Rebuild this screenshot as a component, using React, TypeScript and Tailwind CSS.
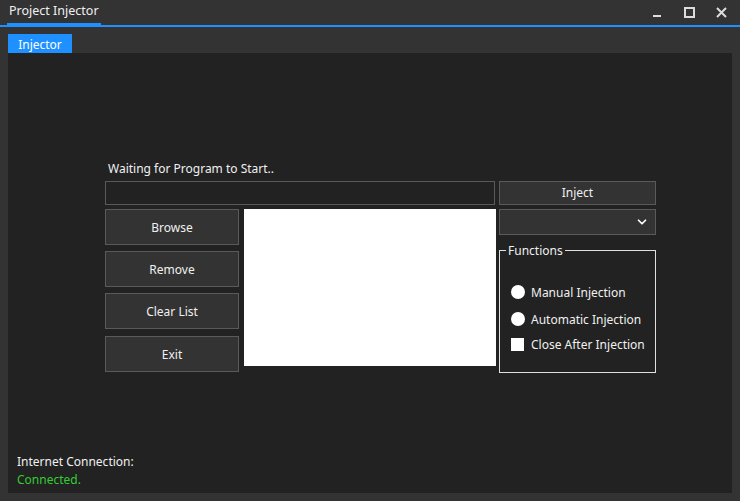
import { ChevronDown } from "lucide-react"

const buttons = [
  { label: "Browse", mt: "" },
  { label: "Remove", mt: "mt-[6px]" },
  { label: "Clear List", mt: "mt-[6px]" },
  { label: "Exit", mt: "mt-[7px]" },
]

function Radio({ label }: { label: string }) {
  return (
    <div className="flex items-center h-[18px]">
      <span className="w-[14px] h-[14px] rounded-full bg-white" />
      <span className="ml-[6px] pt-[2px]">{label}</span>
    </div>
  )
}

export default function App() {
  return (
    <div
      className="w-[740px] h-[501px] bg-[#333333] text-[#f0f0f0] text-[12px] flex flex-col overflow-hidden"
      style={{ fontFamily: '"Noto Sans", "Open Sans", sans-serif' }}
    >
      {/* title bar */}
      <div className="h-[27px] flex border-b-2 border-[#1e90ff] relative">
        <div className="ml-[7px] px-[2px] h-[25px] flex items-center border-b-2 border-[#1e90ff] text-[12.5px] leading-none">
          Project Injector
        </div>
        <div className="ml-auto flex items-center h-[25px] text-[#dcdcdc]">
          <div className="w-[32px] h-[25px] flex items-center justify-center">
            <span className="w-[8px] h-[2px] bg-[#dcdcdc] mt-[6px]" />
          </div>
          <div className="w-[32px] h-[25px] flex items-center justify-center">
            <span className="w-[11px] h-[11px] border-2 border-[#dcdcdc]" />
          </div>
          <div className="w-[32px] h-[25px] flex items-center justify-center mr-[3px]">
            <svg width="11" height="11" viewBox="0 0 11 11">
              <path d="M1 1 L10 10 M10 1 L1 10" stroke="#dcdcdc" strokeWidth="2" />
            </svg>
          </div>
        </div>
      </div>

      {/* tabs */}
      <div className="mt-[7px] ml-[8px] flex">
        <div className="w-[64px] h-[19px] bg-[#1e90ff] text-white flex items-center justify-center pt-[2px]">
          Injector
        </div>
      </div>

      {/* panel */}
      <div className="mx-[8px] w-[724px] h-[440px] bg-[#222222] flex flex-col">
        <div className="ml-[97px] mt-[108px] flex flex-col">
          <div className="h-[16px] leading-[16px] ml-[3px]">Waiting for Program to Start..</div>
          <div className="mt-[4px] flex h-[24px]">
            <div className="w-[390px] border border-[#5a5a5a] bg-[#222222]" />
            <div className="ml-[4px] w-[157px] border border-[#5a5a5a] bg-[#333333] flex items-center justify-center">
              Inject
            </div>
          </div>
          <div className="mt-[4px] flex items-start">
            <div className="w-[134px] flex flex-col">
              {buttons.map((b) => (
                <div
                  key={b.label}
                  className={`h-[36px] border border-[#5a5a5a] bg-[#333333] flex items-center justify-center pt-[2px] ${b.mt}`}
                >
                  {b.label}
                </div>
              ))}
            </div>
            <div className="ml-[5px] w-[252px] h-[157px] bg-white" />
            <div className="ml-[3px] w-[157px] flex flex-col">
              <div className="h-[26px] border border-[#5a5a5a] bg-[#333333] flex items-center justify-end pr-[6px]">
                <ChevronDown size={14} strokeWidth={3} className="text-white" />
              </div>
              <div className="mt-[15px] h-[123px] border border-[#e0e0e0] relative">
                <span className="absolute -top-[7px] left-[6px] px-[2px] bg-[#222222] leading-[14px]">
                  Functions
                </span>
                <div className="mt-[32px] ml-[11px] flex flex-col">
                  <Radio label="Manual Injection" />
                  <div className="mt-[9px]">
                    <Radio label="Automatic Injection" />
                  </div>
                  <div className="mt-[7px] flex items-center h-[18px]">
                    <span className="w-[13px] h-[13px] bg-white" />
                    <span className="ml-[7px] pt-[2px]">Close After Injection</span>
                  </div>
                </div>
              </div>
            </div>
          </div>
        </div>
        <div className="mt-auto mb-[4px] ml-[9px] flex flex-col leading-[18px]">
          <span>Internet Connection:</span>
          <span className="text-[#32cd32]">Connected.</span>
        </div>
      </div>
    </div>
  )
}
